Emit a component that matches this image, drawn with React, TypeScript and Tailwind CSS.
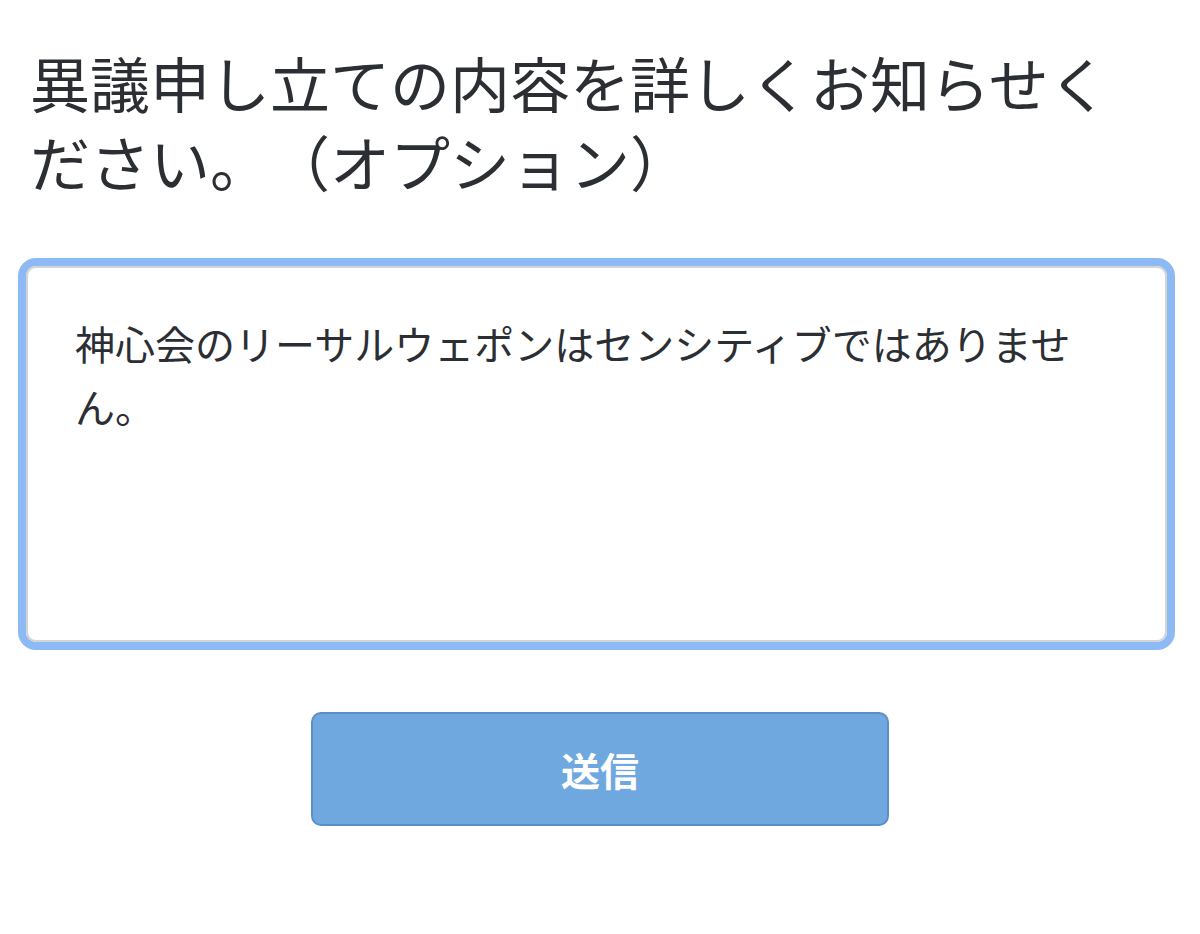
// App.tsx
const jp = { fontFamily: '"Noto Sans CJK JP", "Noto Sans", sans-serif' };

const App = () => {
  return (
    <div className="min-h-screen w-[1200px] bg-white" style={jp}>
      <div className="pt-[42px] pl-[30px] pr-[60px]">
        <h1 className="text-[60px] leading-[79px] font-normal text-[#2b2e33] [text-spacing-trim:space-all]">
          異議申し立ての内容を詳しくお知らせください。（オプション）
        </h1>
      </div>

      <div className="mt-[58px] ml-[18px] mr-[25px] rounded-[18px] border-[8px] border-[#8db9f4]">
        <textarea
          readOnly
          className="block w-full h-[376px] resize-none rounded-[10px] border-2 border-[#d4d4d4] bg-white pt-[44px] pl-[47px] pr-[60px] text-[40px] leading-[63px] text-[#2b2e33] outline-none"
          style={jp}
          defaultValue="神心会のリーサルウェポンはセンシティブではありません。"
        />
      </div>

      <div className="mt-[62px] flex justify-center">
        <button
          className="w-[578px] h-[114px] rounded-[10px] border-2 border-[#5a8ec6] bg-[#6fa8df] text-[39px] font-bold text-white"
          style={jp}
        >
          送信
        </button>
      </div>
    </div>
  );
};

export default App;
